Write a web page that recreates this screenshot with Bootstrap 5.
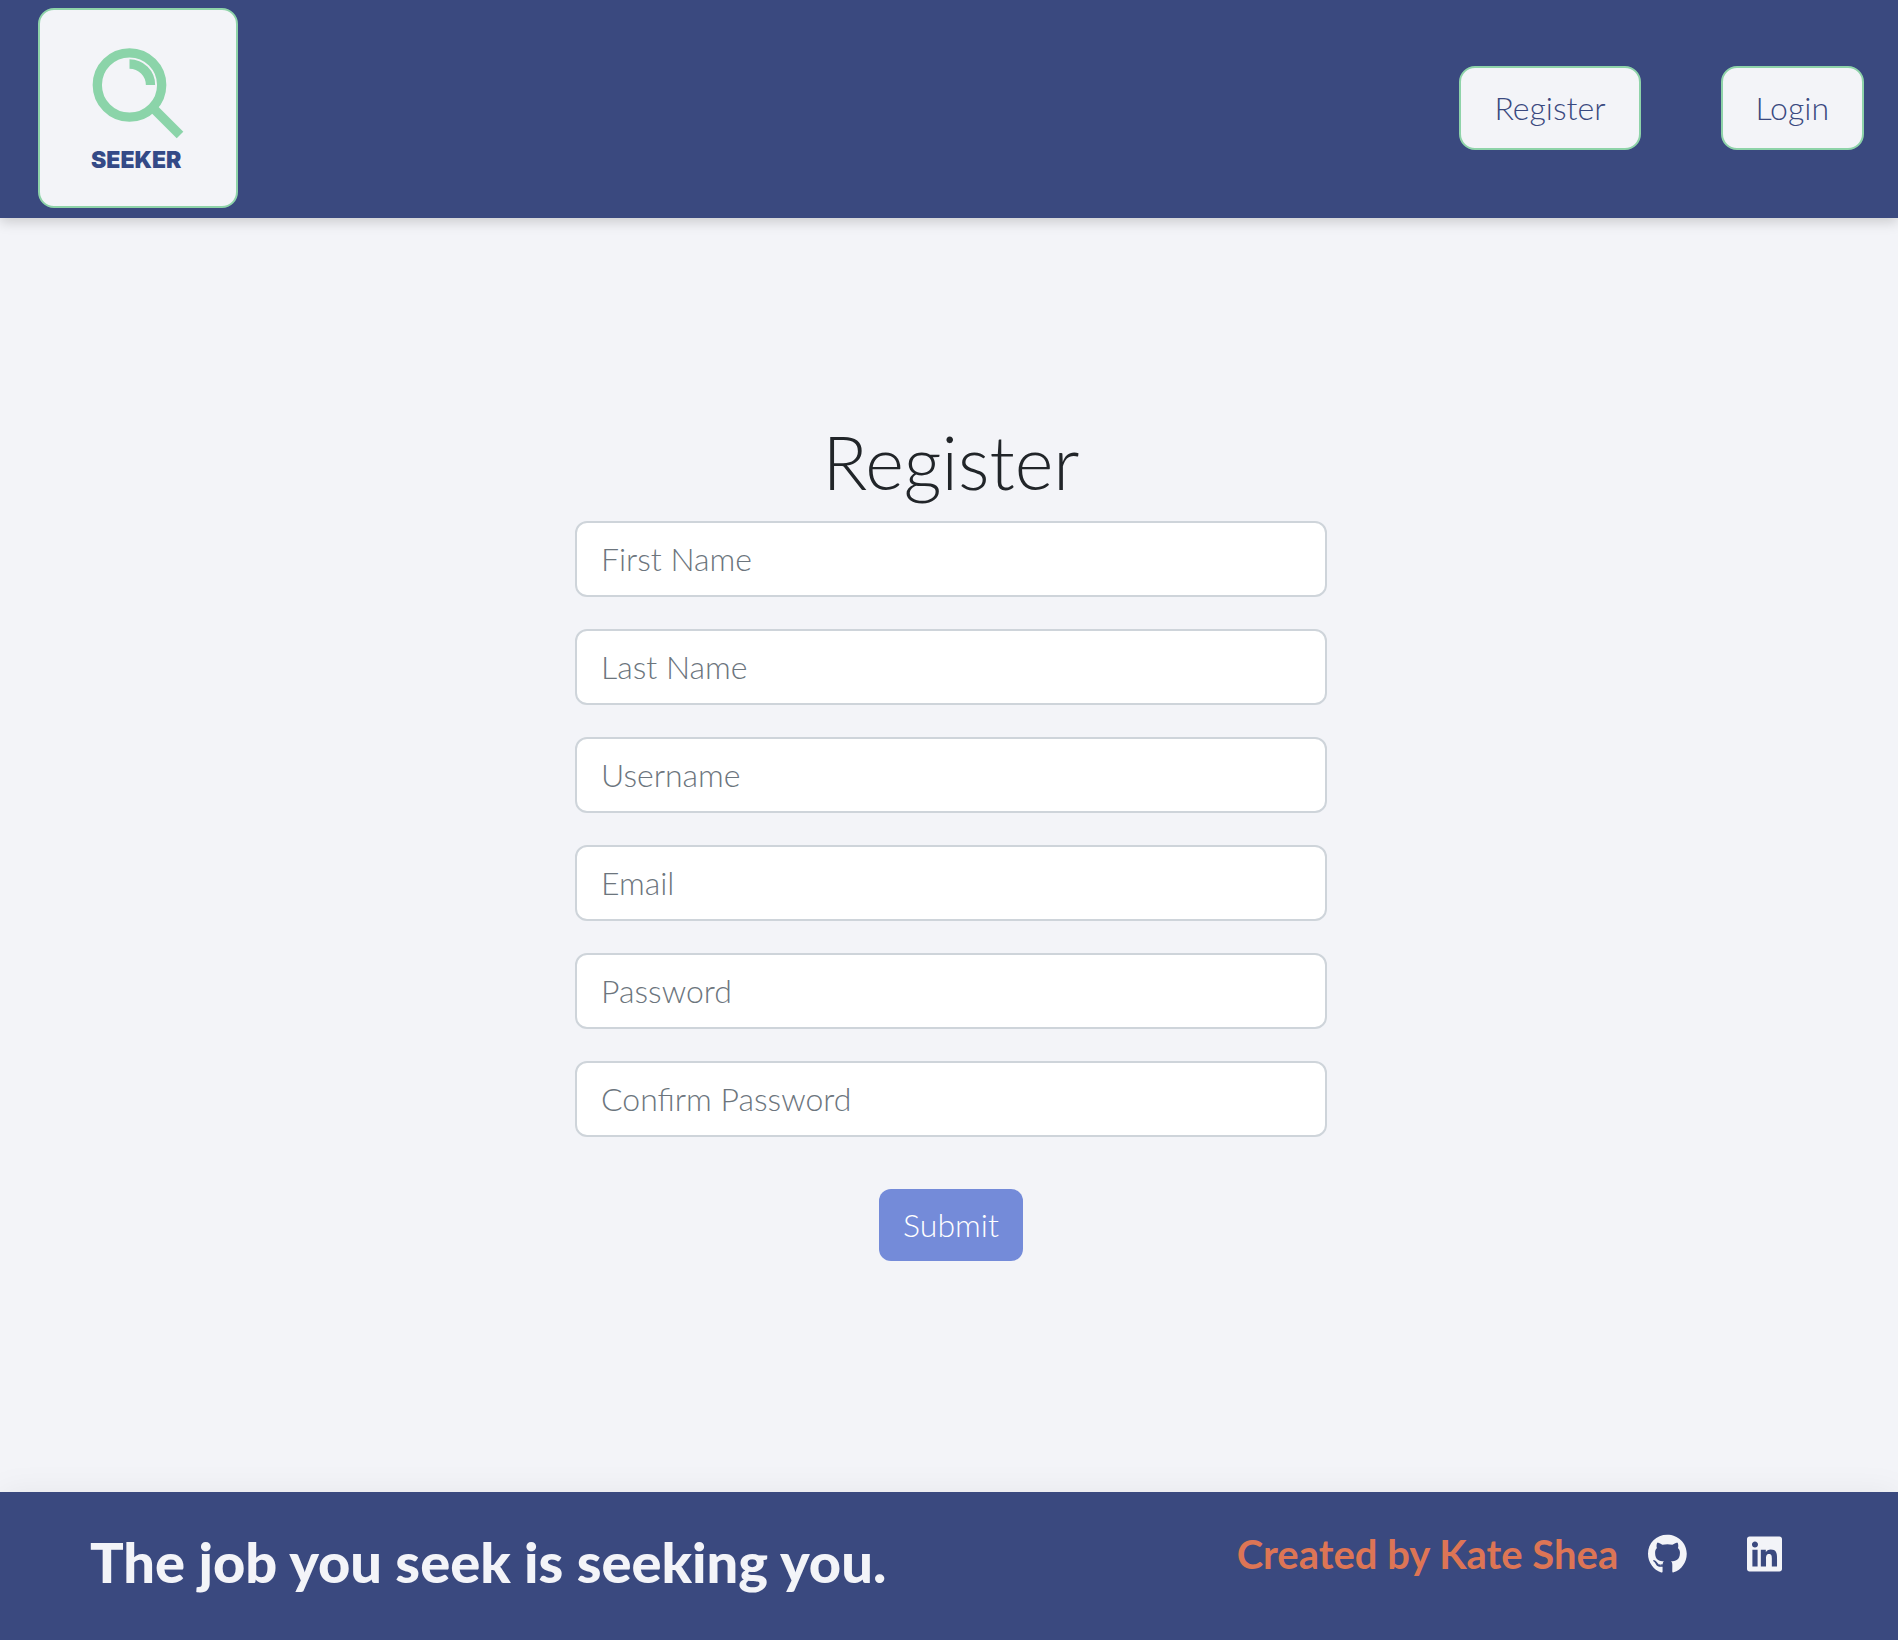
<!DOCTYPE html>
<html lang="en">
<head>
<meta charset="utf-8">
<meta name="viewport" content="width=device-width, initial-scale=1">
<title>Seeker | Register</title>
<link rel="stylesheet" href="https://cdn.jsdelivr.net/npm/bootstrap@5.3.0/dist/css/bootstrap.min.css">
<style>
  :root { --navy: #3a497f; --mist: #f3f4f8; --mint: #8ed3a9; --coral: #dd7555; }
  body { font-family: Lato, "Liberation Sans", sans-serif; font-weight: 300; font-size: 32px; line-height: 48px; background: var(--mist); color: #212529; }
  .site-header { background: var(--navy); padding: 8px 34px 10px 38px; box-shadow: 0 4px 12px rgba(0,0,0,.17); }
  .brand-tile { width: 200px; height: 200px; background: var(--mist); border: 2px solid var(--mint); border-radius: 16px; }
  .header-links { gap: 80px; }
  .header-btn, .header-btn:hover { background: var(--mist); color: var(--navy); border: 2px solid var(--mint); border-radius: 16px; padding: 16px 33px; font-size: 32px; line-height: 48px; font-weight: 300; }
  .page-main { padding-top: 200px; padding-bottom: 229px; }
  .register-form { max-width: 752px; }
  .form-title { font-size: 74px; line-height: 88px; font-weight: 300; margin-bottom: 15px; }
  .field-stack { gap: 32px; }
  .register-form .form-control { height: 76px; border: 2px solid #ced4da; border-radius: 12px; padding: 11px 24px 13px; font-size: 32px; line-height: 48px; font-weight: 300; background: #fff; }
  .register-form .form-control::placeholder { color: #6c757d; }
  .submit-btn, .submit-btn:hover { background: #748bd9; color: #fff; border: 0; border-radius: 12px; padding: 12px 24px; margin-top: 52px; font-size: 32px; line-height: 48px; font-weight: 300; }
  .site-footer { background: var(--navy); padding: 38px 116px 46px 90px; box-shadow: 0 0 32px rgba(0,0,0,.06); }
  .tagline { font-size: 56px; line-height: 64px; font-weight: 900; color: var(--mist); }
  .credit { font-size: 40px; line-height: 48px; font-weight: 700; color: var(--coral); margin-right: 30px; }
  .social-links { gap: 60px; }
  .social-links a { color: var(--mist); }
  .social-links svg { height: 40px; display: block; fill: currentColor; }
</style>
<script defer src="https://cdn.jsdelivr.net/npm/bootstrap@5.3.0/dist/js/bootstrap.bundle.min.js"></script>
</head>
<body class="d-flex flex-column min-vh-100">
<header class="site-header d-flex align-items-center justify-content-between">
  <a href="#" class="brand-tile d-block" aria-label="Seeker home">
    <svg class="d-block" viewBox="0 0 196 196" width="196" height="196">
      <g fill="none" stroke="#8bd4a9" stroke-width="9.300">
        <circle cx="89.500" cy="75" r="32.200"/>
        <path d="M89.500 54a21 21 0 0 1 21 21"/>
        <path d="M114 99l26 26"/>
      </g>
      <text x="51" y="158" font-family="Inter, sans-serif" font-weight="900" font-size="23" fill="#344a87">SEEKER</text>
    </svg>
  </a>
  <nav class="header-links d-flex" aria-label="Account">
    <a href="#" class="btn header-btn">Register</a>
    <a href="#" class="btn header-btn">Login</a>
  </nav>
</header>
<main class="page-main flex-grow-1 ps-1">
  <form class="register-form mx-auto d-flex flex-column">
    <h1 class="form-title text-center">Register</h1>
    <div class="field-stack d-flex flex-column">
      <input class="form-control" type="text" placeholder="First Name" aria-label="First Name">
      <input class="form-control" type="text" placeholder="Last Name" aria-label="Last Name">
      <input class="form-control" type="text" placeholder="Username" aria-label="Username">
      <input class="form-control" type="email" placeholder="Email" aria-label="Email">
      <input class="form-control" type="password" placeholder="Password" aria-label="Password">
      <input class="form-control" type="password" placeholder="Confirm Password" aria-label="Confirm Password">
    </div>
    <button type="submit" class="btn submit-btn align-self-center">Submit</button>
  </form>
</main>
<footer class="site-footer d-flex justify-content-between align-items-start">
  <p class="tagline mb-0">The job you seek is seeking you.</p>
  <div class="d-flex align-items-center">
    <span class="credit">Created by Kate Shea</span>
    <div class="social-links d-flex">
      <a href="#" aria-label="GitHub"><svg viewBox="0 0 496 512"><path d="M165.900 397.400c0 2-2.300 3.600-5.200 3.600-3.300.3-5.600-1.300-5.600-3.600 0-2 2.300-3.600 5.200-3.600 3-.3 5.600 1.300 5.600 3.600zm-31.100-4.500c-.7 2 1.300 4.300 4.300 4.900 2.600 1 5.600 0 6.200-2s-1.300-4.300-4.300-5.200c-2.600-.7-5.500.3-6.200 2.300zm44.200-1.700c-2.900.7-4.900 2.600-4.600 4.900.3 2 2.900 3.300 5.900 2.600 2.900-.7 4.900-2.600 4.600-4.600-.3-1.900-3-3.200-5.900-2.900zM244.800 8C106.100 8 0 113.300 0 252c0 110.900 69.800 205.800 169.500 239.200 12.800 2.300 17.300-5.600 17.300-12.100 0-6.200-.3-40.400-.3-61.400 0 0-70 15-84.700-29.800 0 0-11.400-29.100-27.800-36.600 0 0-22.900-15.700 1.600-15.400 0 0 24.900 2 38.600 25.800 21.900 38.600 58.600 27.500 72.900 20.900 2.300-16 8.800-27.100 16-33.700-55.900-6.200-112.300-14.300-112.300-110.500 0-27.500 7.600-41.300 23.600-58.900-2.600-6.500-11.100-33.300 2.600-67.900 20.900-6.500 69 27 69 27 20-5.600 41.500-8.500 62.800-8.500s42.800 2.900 62.800 8.500c0 0 48.100-33.600 69-27 13.700 34.700 5.200 61.400 2.600 67.900 16 17.700 25.800 31.500 25.800 58.900 0 96.500-58.900 104.200-114.800 110.500 9.200 7.900 17 22.900 17 46.400 0 33.700-.3 75.400-.3 83.600 0 6.500 4.600 14.400 17.300 12.100C428.200 457.800 496 362.900 496 252 496 113.300 383.500 8 244.800 8z"/></svg></a>
      <a href="#" aria-label="LinkedIn"><svg viewBox="0 0 448 512"><path d="M416 32H31.900C14.300 32 0 46.500 0 64.300v383.400C0 465.500 14.300 480 31.900 480H416c17.600 0 32-14.500 32-32.300V64.300c0-17.800-14.400-32.300-32-32.300zM135.400 416H69V202.200h66.500V416zm-33.200-243c-21.300 0-38.500-17.300-38.500-38.500S80.900 96 102.200 96c21.200 0 38.500 17.300 38.500 38.500 0 21.300-17.200 38.500-38.500 38.500zm282.100 243h-66.400V312c0-24.800-.5-56.700-34.500-56.700-34.600 0-39.900 27-39.900 54.900V416h-66.400V202.200h63.700v29.200h.9c8.900-16.800 30.600-34.500 62.900-34.500 67.200 0 79.700 44.300 79.700 101.900V416z"/></svg></a>
    </div>
  </div>
</footer>
</body>
</html>
